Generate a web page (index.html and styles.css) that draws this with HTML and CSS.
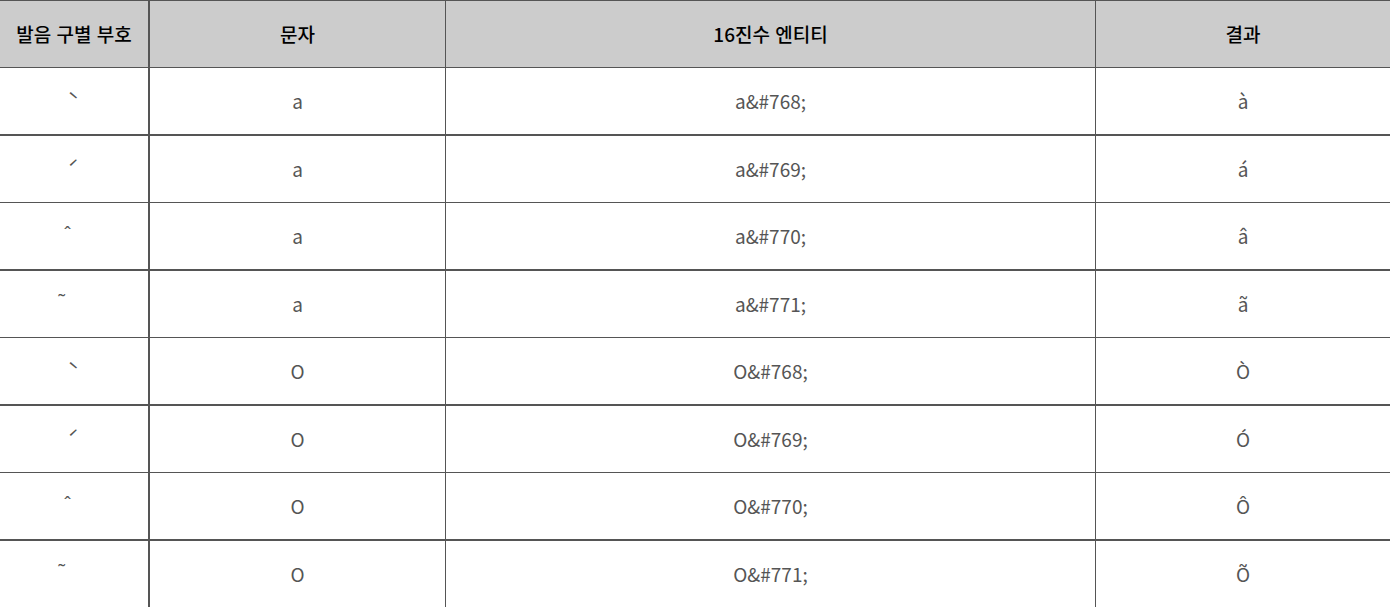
FILE: index.html
```html
<!DOCTYPE html>
<html lang="en">
<head>
<meta charset="utf-8">
<link rel="stylesheet" href="styles.css">
</head>
<body>
<table class="marks">
  <colgroup>
    <col class="c1"><col class="c2"><col class="c3"><col class="c4">
  </colgroup>
  <thead>
    <tr class="thin"><th lang="ko">발음 구별 부호</th><th lang="ko">문자</th><th lang="ko">16진수 엔티티</th><th lang="ko">결과</th></tr>
  </thead>
  <tbody>
    <tr class="thick"><td class="mark">&#768;</td><td>a</td><td>a&amp;#768;</td><td>a&#768;</td></tr>
    <tr class="thin"><td class="mark">&#769;</td><td>a</td><td>a&amp;#769;</td><td>a&#769;</td></tr>
    <tr class="thick"><td class="mark">&#770;</td><td>a</td><td>a&amp;#770;</td><td>a&#770;</td></tr>
    <tr class="thin"><td class="mark">&#771;</td><td>a</td><td>a&amp;#771;</td><td>a&#771;</td></tr>
    <tr class="thick"><td class="mark">&#768;</td><td>O</td><td>O&amp;#768;</td><td>O&#768;</td></tr>
    <tr class="thin"><td class="mark">&#769;</td><td>O</td><td>O&amp;#769;</td><td>O&#769;</td></tr>
    <tr class="thick"><td class="mark">&#770;</td><td>O</td><td>O&amp;#770;</td><td>O&#770;</td></tr>
    <tr class="thin"><td class="mark">&#771;</td><td>O</td><td>O&amp;#771;</td><td>O&#771;</td></tr>
  </tbody>
</table>
</body>
</html>
```

FILE: styles.css
```css
html, body {
  margin: 0;
  padding: 0;
  background: #fff;
  overflow: hidden;
}
body {
  font-family: "Noto Sans CJK KR", "Noto Sans", sans-serif;
}
.marks {
  table-layout: fixed;
  border-collapse: separate;
  border-spacing: 0;
  width: 1390px;
  border-top: 1px solid #555;
}
.c1 { width: 150px; }
.c2 { width: 296px; }
.c3 { width: 650px; }
.c4 { width: 294px; }
.marks th,
.marks td {
  height: 66px;
  padding: 0;
  text-align: center;
  vertical-align: middle;
  border-right: 1px solid #555;
  box-sizing: content-box;
  line-height: 1.4;
}
.marks th:first-child,
.marks td:first-child {
  border-right-width: 2px;
}
.marks th:last-child,
.marks td:last-child {
  border-right: none;
}
.marks tr.thin > * { border-bottom: 1px solid #555; }
.marks tr.thick > * { border-bottom: 2px solid #555; }
.marks th {
  background: #ccc;
  color: #000;
  font-size: 19px;
  font-weight: 500;
}
.marks td {
  color: #555;
  font-size: 19px;
}
.marks td.mark {
  padding-right: 13px;
  padding-bottom: 6px;
  height: 60px;
  width: 135px;
}
```
